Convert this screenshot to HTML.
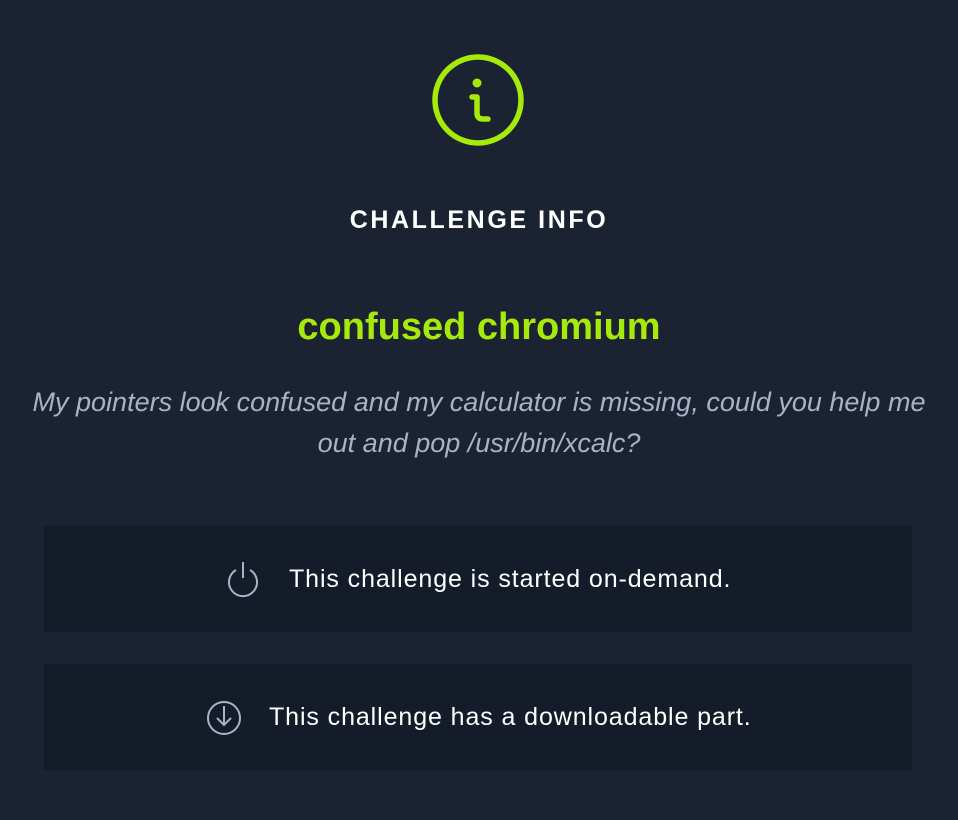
<!DOCTYPE html>
<html><head><style>
html,body{margin:0;width:958px;height:820px;background:#1b2332;overflow:hidden}
body{font-family:"Liberation Sans",sans-serif;position:relative}
.t{position:absolute;left:0;width:958px;text-align:center}
.box{position:absolute;left:44px;width:868px;height:106px;background:#141c29;color:#fff;font-size:25px;letter-spacing:0.9px}
.box span{position:absolute;top:39px}
</style></head><body>
<svg style="position:absolute;left:430px;top:52px" width="96" height="96" viewBox="0 0 96 96">
<circle cx="48" cy="48" r="43" fill="none" stroke="#a6ea0c" stroke-width="5.5"/>
<circle cx="47" cy="31" r="4.5" fill="#a6ea0c"/>
<path d="M42 45 H47 V61 Q47 67 53 67 H58" fill="none" stroke="#a6ea0c" stroke-width="5.5" stroke-linecap="round" stroke-linejoin="round"/>
</svg>
<div class="t" style="top:206px;color:#fff;font-size:25px;font-weight:bold;letter-spacing:2.6px">CHALLENGE INFO</div>
<div class="t" style="top:306px;color:#a6ea0c;font-size:38px;font-weight:bold">confused chromium</div>
<div class="t" style="top:382px;color:#a7b3c8;font-size:27px;font-style:italic;line-height:41px">My pointers look confused and my calculator is missing, could you help me<br>out and pop /usr/bin/xcalc?</div>
<div class="box" style="top:526px">
<svg style="position:absolute;left:183px;top:34px" width="32" height="40" viewBox="0 0 32 40"><path d="M9 10 A14 14 0 1 0 23 10" fill="none" stroke="#a7b3c8" stroke-width="2"/><path d="M16 2 V18" stroke="#a7b3c8" stroke-width="2"/></svg>
<span style="left:245px">This challenge is started on-demand.</span></div>
<div class="box" style="top:664px">
<svg style="position:absolute;left:162px;top:36px" width="36" height="36" viewBox="0 0 36 36"><circle cx="18" cy="18" r="16" fill="none" stroke="#a7b3c8" stroke-width="2"/><path d="M18 6 V25 M11 18 L18 25 L25 18" fill="none" stroke="#a7b3c8" stroke-width="2"/></svg>
<span style="left:225px">This challenge has a downloadable part.</span></div>
</body></html>
